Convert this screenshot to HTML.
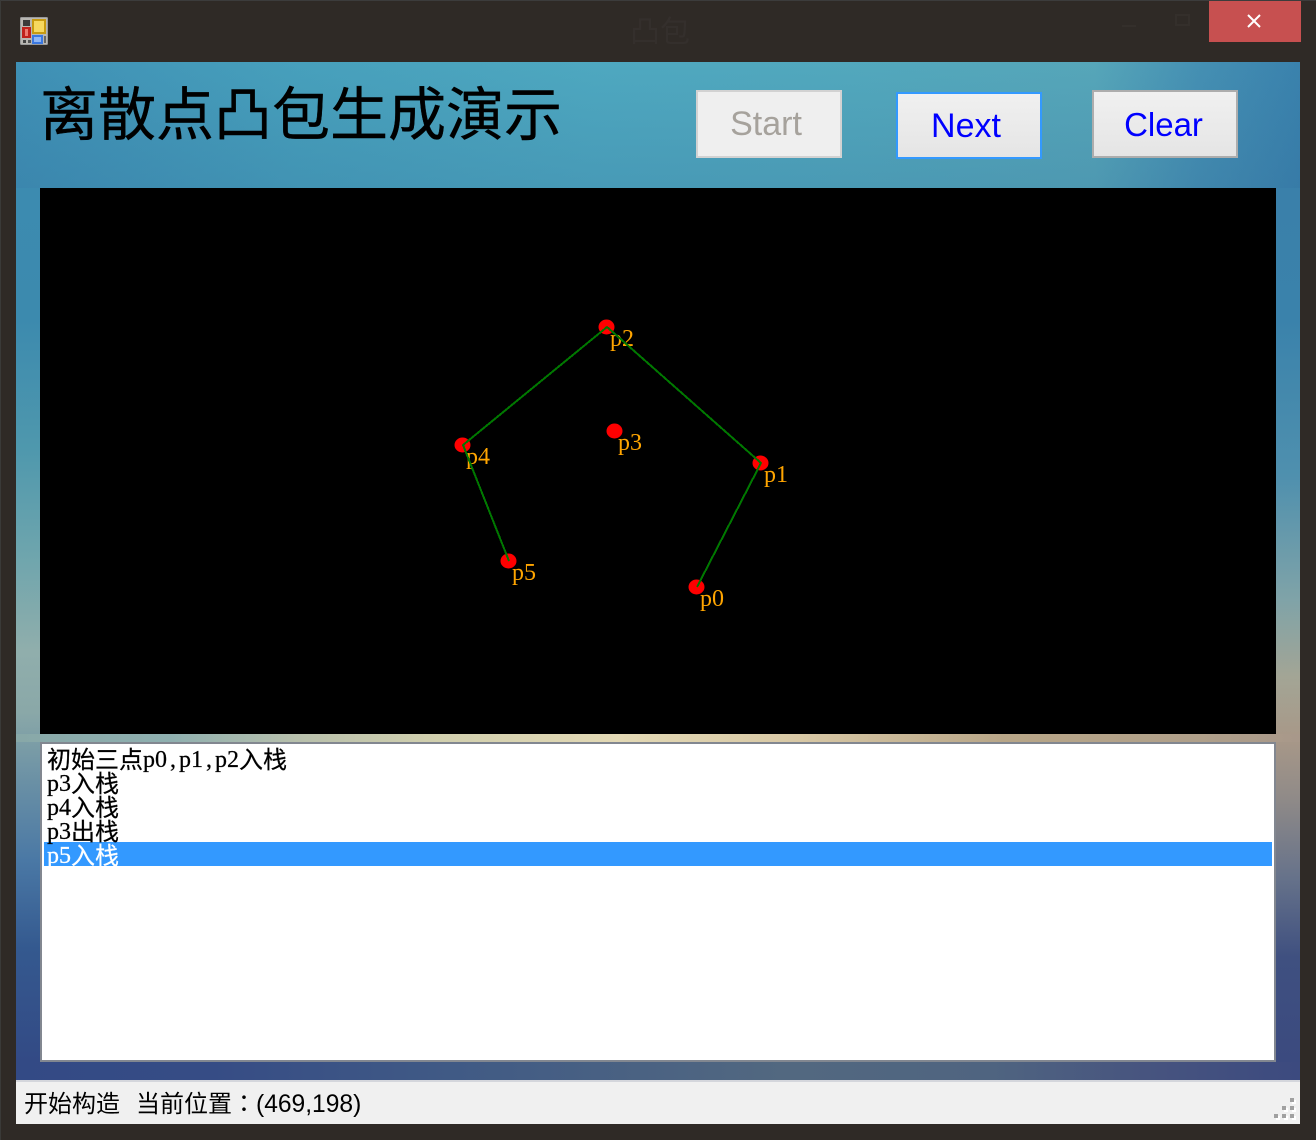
<!DOCTYPE html>
<html><head><meta charset="utf-8">
<style>
html,body{margin:0;padding:0;width:1316px;height:1140px;overflow:hidden;background:#2f2a26}
div,span{position:absolute;white-space:pre}
span.i{position:static}
.b{box-sizing:border-box;border:2px solid;font:33px/1 "Liberation Sans",sans-serif;color:#00f;text-align:center;background:linear-gradient(#f0f0f0,#e5e5e5)}
.r{left:47px;height:24px;font:24px/24px "WenQuanYi Zen Hei","Noto Sans CJK SC",sans-serif;color:#000;-webkit-text-stroke:.25px currentColor}
.m{font:24px/24px "Liberation Serif",serif;position:relative;top:-1px}
.c{position:static;letter-spacing:3px;padding-left:3px}
.g{width:4px;height:4px;background:#a0a0a0;box-shadow:2px 2px 0 #fff}
</style></head><body>
<div style="left:0;top:0;width:1316px;height:1px;background:#3c3c3c"></div>
<div style="left:0;top:0;width:1px;height:1140px;background:#3a3a38"></div>

<svg style="position:absolute;left:20px;top:17px" width="28" height="28" viewBox="0 0 28 28">
<rect x=".5" y=".5" width="27" height="27" rx="1" fill="#b9b7b2" stroke="#9a9a9a"/>
<rect x="3" y="3" width="7" height="6" fill="#3a3a3a"/>
<rect x="12" y="2" width="14" height="15" fill="#c79a10"/><rect x="14" y="4" width="10" height="11" fill="#f6d860"/>
<rect x="2" y="10" width="9" height="11" fill="#c0221c"/><rect x="5" y="12" width="3" height="7" fill="#ee7a70"/>
<rect x="3" y="23" width="3" height="3" fill="#444"/><rect x="8" y="23" width="3" height="3" fill="#555"/>
<rect x="12" y="18" width="11" height="9" fill="#3b78e0"/><rect x="14" y="20" width="7" height="5" fill="#8fb6f5"/>
<rect x="24" y="19" width="2" height="7" fill="#666"/>
</svg>
<div style="left:630px;top:9px;font:30px/40px 'Noto Sans CJK SC',sans-serif;color:#342f2c">凸包</div>
<div style="left:1122px;top:25px;width:14px;height:2px;background:#342f2b"></div>
<div style="left:1175px;top:14px;width:15px;height:12px;border:2px solid #342f2b;box-sizing:border-box"></div>
<div style="left:1209px;top:1px;width:92px;height:41px;background:#c75050"></div>
<svg style="position:absolute;left:1246px;top:13px" width="16" height="16" viewBox="0 0 16 16"><path d="M2 2L14 14M14 2L2 14" stroke="#fff" stroke-width="2" fill="none"/></svg>

<!-- form backdrop bands -->
<div style="left:16px;top:62px;width:1284px;height:126px;background:linear-gradient(rgba(40,90,140,0),rgba(40,90,140,.18)),linear-gradient(90deg,#3f90b5 0,#47a0bc 22%,#4ea8c0 45%,#52a8bd 65%,#56a6b9 84%,#4590b3 92%,#3a82ad 100%)"></div>
<div style="left:16px;top:188px;width:24px;height:874px;background:linear-gradient(#3c8bb0 0,#3c8aae 15%,#4f98ad 30%,#6ea5ad 42%,#90aeac 53%,#8aa8a8 60%,#6a90a5 68%,#4a78a5 77%,#34598f 87%,#334a85 100%)"></div>
<div style="left:1276px;top:188px;width:24px;height:874px;background:linear-gradient(#3a80aa 0,#3a82ab 15%,#4f90ae 33%,#7fa3a8 47%,#a3a595 56%,#a89888 63%,#8f8a88 70%,#66728a 79%,#3f5080 88%,#3b4a7f 100%)"></div>
<div style="left:16px;top:734px;width:1284px;height:8px;background:linear-gradient(90deg,#88a8a8 0,#8fb0b0 12%,#b8c0ac 22%,#d0cfae 32%,#e3d9b5 47%,#d8c8a5 61%,#b8a688 77%,#b0a08a 92%,#a8988a 100%)"></div>
<div style="left:16px;top:1062px;width:1284px;height:18px;background:linear-gradient(90deg,#334a85 0,#364c85 15%,#405a85 34%,#526880 60%,#4f6480 76%,#47547f 88%,#3c4a7f 100%)"></div>

<!-- header -->
<div style="left:40px;top:68px;height:84px;font:58px/84px 'Noto Sans CJK SC',sans-serif;color:#000;-webkit-text-stroke:.4px #000">离散点凸包生成演示</div>
<div class="b" style="left:696px;top:90px;width:146px;height:68px;font-size:34px;line-height:65px;text-indent:-6px;border-color:#d2d2d2;background:#efefef;color:#a6a29c">Start</div>
<div class="b" style="left:896px;top:92px;width:146px;height:67px;font-size:34px;line-height:64px;text-indent:-6px;border-color:#3399ff">Next</div>
<div class="b" style="left:1092px;top:90px;width:146px;height:68px;line-height:65px;text-indent:-3px;border-color:#adadad">Clear</div>

<!-- canvas -->
<div style="left:40px;top:188px;width:1236px;height:546px;background:#000"></div>
<svg style="position:absolute;left:0;top:0" width="1316" height="1140">
<g fill="#f00">
<ellipse cx="606.5" cy="327" rx="8" ry="7.5"/><ellipse cx="614.5" cy="431" rx="8" ry="7.5"/><ellipse cx="462.5" cy="445" rx="8" ry="7.5"/>
<ellipse cx="760.5" cy="463" rx="8" ry="7.5"/><ellipse cx="508.5" cy="561" rx="8" ry="7.5"/><ellipse cx="696.5" cy="587" rx="8" ry="7.5"/>
</g>
<g font-family="Liberation Serif" font-size="24" fill="#ffa500">
<text x="610" y="346">p2</text><text x="618" y="450">p3</text><text x="466" y="464">p4</text>
<text x="764" y="482">p1</text><text x="512" y="580">p5</text><text x="700" y="606">p0</text>
</g>
<path d="M697 587L761 463L607 327L463 445L509 561" fill="none" stroke="#007800" stroke-width="2" shape-rendering="crispEdges"/>
</svg>

<!-- list -->
<div style="left:40px;top:742px;width:1236px;height:320px;box-sizing:border-box;border:2px solid #828790;background:#fff"></div>
<div style="left:44px;top:842px;width:1228px;height:24px;background:#3399ff"></div>
<div class="r" style="top:746px">初始三点<span class="m">p0<span class="c">,</span>p1<span class="c">,</span>p2</span>入栈</div>
<div class="r" style="top:770px"><span class="m">p3</span>入栈</div>
<div class="r" style="top:794px"><span class="m">p4</span>入栈</div>
<div class="r" style="top:818px"><span class="m">p3</span>出栈</div>
<div class="r" style="top:842px;color:#fff"><span class="m">p5</span>入栈</div>

<!-- status bar -->
<div style="left:16px;top:1080px;width:1284px;height:44px;background:#f0f0f0"></div>
<div style="left:16px;top:1080px;width:1284px;height:2px;background:#d4d6dc"></div>
<div style="left:24px;top:1085px;font:24px/34px 'Noto Sans CJK SC',sans-serif;color:#000">开始构造</div>
<div style="left:136px;top:1085px;font:24px/34px 'Noto Sans CJK SC',sans-serif;color:#000">当前位置<span class="i" style="font-family:'Noto Sans CJK TC',sans-serif">：</span><span class="i" style="font:24.6px/34px 'Liberation Sans',sans-serif">(469,198)</span></div>
<div class="g" style="left:1290px;top:1098px"></div>
<div class="g" style="left:1282px;top:1106px"></div><div class="g" style="left:1290px;top:1106px"></div>
<div class="g" style="left:1274px;top:1114px"></div><div class="g" style="left:1282px;top:1114px"></div><div class="g" style="left:1290px;top:1114px"></div>
</body></html>
